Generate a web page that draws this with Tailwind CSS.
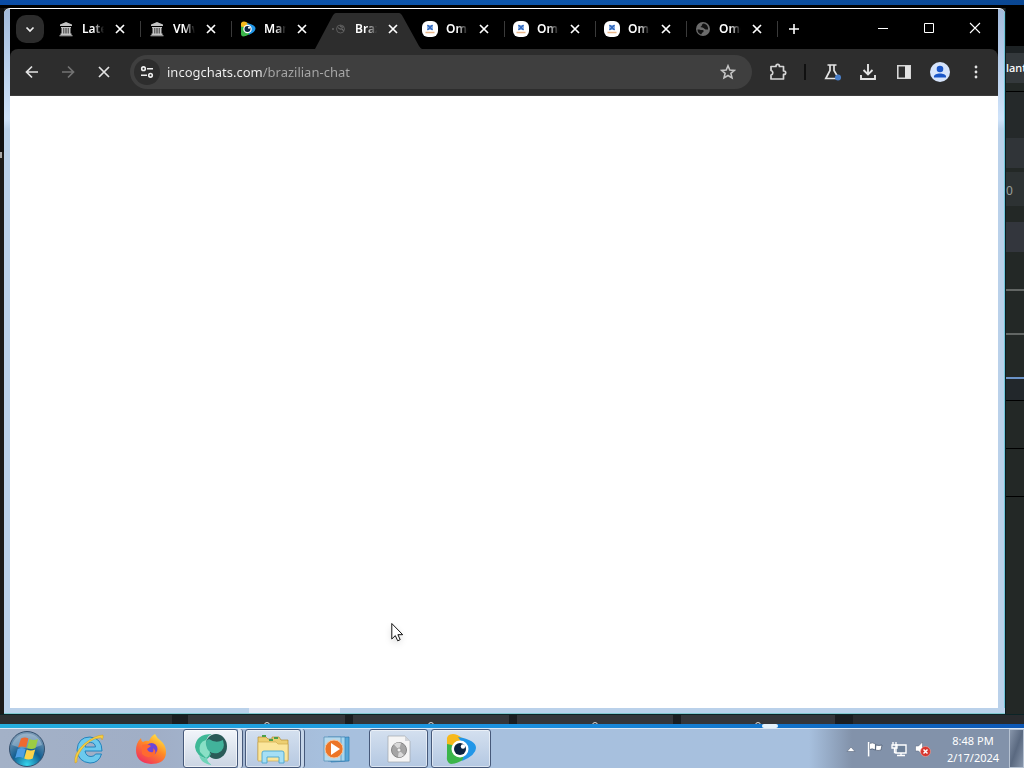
<!DOCTYPE html>
<html lang="en">

<head>
    <meta charset="UTF-8" />
    <meta name="viewport" content="width=device-width, initial-scale=1.0" />
    <title>incogchats.com/brazilian-chat</title>
    <script src="https://cdn.jsdelivr.net/npm/@tailwindcss/browser@4"></script>
</head>

<body class="h-screen flex flex-col overflow-hidden bg-[#242829] font-['Noto_Sans',sans-serif] text-xs text-white">
    <!-- Shared icons -->
    <svg class="hidden">
        <symbol id="x" viewBox="0 0 16 16">
            <path d="M4 4l8 8M12 4l-8 8" stroke="currentColor" stroke-width="1.7" fill="none" />
        </symbol>
        <symbol id="archive" viewBox="0 0 16 16">
            <path d="M8 1l6 2.500V5H2V3.500zM3 6h10v1H3zM3.500 7h2v5.500h-2zM6.200 7h1.400v5.500H6.200zM8.400 7h1.400v5.500H8.400zM10.500 7h2v5.500h-2zM2.500 12.500h11V14h-11zM1.500 14.200h13v1h-13z" fill="#c4c4c4" />
        </symbol>
        <symbol id="globe" viewBox="0 0 16 16">
            <circle cx="8" cy="8" r="7" fill="#6b6b6b" />
            <path d="M2.500 8.500c2-.5 3 1 5 .5 1.500 0 1.500 2 0 2.500-1 .5-.5 1.500-1.500 2-2.500-1-3.500-3-3.500-5zM8.500 2.500c-2 .5-1 2-2.500 3s1.500 1 2.500 1.500 1.500 2 4.500 1.500c.5-3-1.500-5.500-4.500-6z" fill="#111" />
        </symbol>
        <symbol id="omegle" viewBox="0 0 16 16">
            <rect width="16" height="16" rx="6" fill="#fff" />
            <path d="M5 4h6v5H5z" fill="#8db2e6" />
            <path d="M5.500 4l5 5M10.500 4l-5 5" stroke="#2b62b8" stroke-width="1.100" />
            <path d="M3.500 11.500h9" stroke="#e9b78a" stroke-width="1.300" />
        </symbol>
        <symbol id="manycam" viewBox="0 0 32 32">
            <path d="M2 8Q1 1 8 1q4 0 9 4l-8 11-7 4z" fill="#f7b91c" />
            <path d="M2 11l10 2 9 12Q12 31 6 31q-5-1-4-9z" fill="#3bb54a" />
            <path d="M13 4q18 3 18 11 0 7-14 13l4-12z" fill="#2196e8" />
            <circle cx="15" cy="16" r="8.500" fill="#fff" />
            <circle cx="15" cy="16" r="6" fill="#0c2340" />
            <circle cx="18" cy="13.500" r="2.200" fill="#fff" />
        </symbol>
    </svg>

    <!-- Top edge of the desktop -->
    <div class="h-[5px] shrink-0 bg-linear-to-r from-[#0a4ca5] via-[#0c55ab] to-[#0a4793]"></div>
    <div class="h-[3px] shrink-0 bg-black"></div>

    <div class="flex flex-1 min-h-0">
        <div class="w-1 shrink-0 bg-[#1b1a19] flex flex-col">
            <div class="h-36 bg-[#101011]"></div>
            <div class="h-1.5 w-0.5 bg-[#a8a8a8]"></div>
        </div>

        <!-- Browser window -->
        <div class="flex flex-1 flex-col min-w-0 border-t border-white bg-[#bad1ea] rounded-t-md overflow-hidden">
            <div class="flex flex-1 min-h-0 bg-linear-to-b from-[#a3bbdc] via-[#cfe3fa] via-[110px] to-[#bad1ea] to-[120px]">
                <div class="w-1.5 shrink-0"></div>
                <div class="flex flex-1 flex-col min-w-0 bg-black">
                    <!-- Tabs -->
                    <div class="h-10 shrink-0 flex items-center">
                        <button aria-label="Search tabs" class="mx-1.5 size-7 shrink-0 rounded-[10px] bg-[#2c2c2c] flex items-center justify-center">
                            <svg class="size-4" viewBox="0 0 16 16"><path d="M4.500 6.500L8 10l3.500-3.500" fill="none" stroke="#eee" stroke-width="1.700" /></svg>
                        </button>
                        <div class="w-[91px] h-4 flex items-center gap-2 pl-2 border-r border-[#3a3a3a]">
                            <svg class="size-4 shrink-0"><use href="#archive" /></svg>
                            <a href="#" class="w-[22px] overflow-hidden font-semibold mask-r-from-50%">Latest</a>
                            <button aria-label="Close tab" class="size-4"><svg class="size-4"><use href="#x" /></svg></button>
                        </div>
                        <div class="w-[91px] h-4 flex items-center gap-2 pl-2 border-r border-[#3a3a3a]">
                            <svg class="size-4 shrink-0"><use href="#archive" /></svg>
                            <a href="#" class="w-[22px] overflow-hidden font-semibold mask-r-from-50%">VMware</a>
                            <button aria-label="Close tab" class="size-4"><svg class="size-4"><use href="#x" /></svg></button>
                        </div>
                        <div class="w-[91px] h-4 flex items-center gap-2 pl-2">
                            <svg class="size-4 shrink-0"><use href="#manycam" /></svg>
                            <a href="#" class="w-[22px] overflow-hidden font-semibold mask-r-from-50%">ManyCam</a>
                            <button aria-label="Close tab" class="size-4"><svg class="size-4"><use href="#x" /></svg></button>
                        </div>
                        <div class="relative w-[91px] h-10 flex items-center gap-2 pl-2">
                            <svg class="absolute -left-2 bottom-0 w-[107px] h-9" viewBox="0 0 107 36"><path d="M0 36L17 4Q19 0 21 0H84Q86 0 88 4L104 33Q106 36 107 36z" fill="#2d2d2d" /></svg>
                            <svg class="relative size-4 shrink-0" viewBox="0 0 16 16">
                                <circle cx="2" cy="8" r="1" fill="#606060" />
                                <circle cx="9.500" cy="8" r="4" fill="none" stroke="#5c5c5c" />
                                <path d="M7 6.500q1.500 2 3 1.500t2.500 2M9 4.500q1 2 3.500 1.500" fill="none" stroke="#6a6a6a" stroke-width="1.100" />
                            </svg>
                            <a href="#" class="relative w-[22px] overflow-hidden font-semibold mask-r-from-50%">Brazilian</a>
                            <button aria-label="Close tab" class="relative size-4"><svg class="size-4"><use href="#x" /></svg></button>
                        </div>
                        <div class="w-[91px] h-4 flex items-center gap-2 pl-2 border-r border-[#3a3a3a]">
                            <svg class="size-4 shrink-0"><use href="#omegle" /></svg>
                            <a href="#" class="w-[22px] overflow-hidden font-semibold mask-r-from-50%">Omegle</a>
                            <button aria-label="Close tab" class="size-4"><svg class="size-4"><use href="#x" /></svg></button>
                        </div>
                        <div class="w-[91px] h-4 flex items-center gap-2 pl-2 border-r border-[#3a3a3a]">
                            <svg class="size-4 shrink-0"><use href="#omegle" /></svg>
                            <a href="#" class="w-[22px] overflow-hidden font-semibold mask-r-from-50%">Omegle</a>
                            <button aria-label="Close tab" class="size-4"><svg class="size-4"><use href="#x" /></svg></button>
                        </div>
                        <div class="w-[91px] h-4 flex items-center gap-2 pl-2 border-r border-[#3a3a3a]">
                            <svg class="size-4 shrink-0"><use href="#omegle" /></svg>
                            <a href="#" class="w-[22px] overflow-hidden font-semibold mask-r-from-50%">Omegle</a>
                            <button aria-label="Close tab" class="size-4"><svg class="size-4"><use href="#x" /></svg></button>
                        </div>
                        <div class="w-[91px] h-4 flex items-center gap-2 pl-2 border-r border-[#3a3a3a]">
                            <svg class="size-4 shrink-0"><use href="#globe" /></svg>
                            <a href="#" class="w-[22px] overflow-hidden font-semibold mask-r-from-50%">Omegle</a>
                            <button aria-label="Close tab" class="size-4"><svg class="size-4"><use href="#x" /></svg></button>
                        </div>
                        <button aria-label="New tab" class="w-8 flex justify-center">
                            <svg class="size-4" viewBox="0 0 16 16"><path d="M8 3v10M3 8h10" stroke="#fff" stroke-width="1.600" /></svg>
                        </button>
                        <!-- Window controls -->
                        <div class="ml-auto flex pb-0.5">
                            <button aria-label="Minimize" class="w-[46px] flex justify-center"><svg class="size-4" viewBox="0 0 16 16"><path d="M3 8.500h10" stroke="#fff" /></svg></button>
                            <button aria-label="Maximize" class="w-[46px] flex justify-center"><svg class="size-4" viewBox="0 0 16 16"><path d="M3.500 3.500h9v9h-9z" fill="none" stroke="#fff" /></svg></button>
                            <button aria-label="Close" class="w-[46px] flex justify-center"><svg class="size-4" viewBox="0 0 16 16"><path d="M3 3l10 10M13 3L3 13" stroke="#fff" stroke-width="1.100" /></svg></button>
                        </div>
                    </div>

                    <!-- Toolbar -->
                    <div class="h-[47px] shrink-0 flex items-center px-1 rounded-t-lg bg-[#2d2d2d] border-b border-[#3c3c3c]">
                        <button aria-label="Back" class="w-9 flex justify-center"><svg class="size-4" viewBox="0 0 16 16"><path d="M14 8H3M8 2.500L2.500 8 8 13.500" fill="none" stroke="#e3e3e3" stroke-width="1.700" /></svg></button>
                        <button aria-label="Forward" class="w-9 flex justify-center"><svg class="size-4" viewBox="0 0 16 16"><path d="M2 8h11M8 2.500L13.500 8 8 13.500" fill="none" stroke="#737373" stroke-width="1.700" /></svg></button>
                        <button aria-label="Stop" class="w-9 flex justify-center"><svg class="size-4" viewBox="0 0 16 16"><path d="M3 3l10 10M13 3L3 13" stroke="#e3e3e3" stroke-width="1.700" /></svg></button>
                        <div class="mx-2 h-[34px] flex-1 min-w-0 flex items-center rounded-full bg-[#3f3f3f] pl-1 pr-4">
                            <button aria-label="View site information" class="size-[26px] shrink-0 rounded-full bg-[#2d2d2d] flex items-center justify-center">
                                <svg class="size-4" viewBox="0 0 16 16" fill="none" stroke="#eee" stroke-width="1.600"><circle cx="4.500" cy="4.700" r="1.800" /><path d="M8 4.700h6M2 11.300h6" /><circle cx="11.500" cy="11.300" r="1.800" /></svg>
                            </button>
                            <input aria-label="Address" value="incogchats.com/brazilian-chat" class="ml-[7px] pt-0.5 flex-1 min-w-0 text-[13px] text-transparent bg-clip-text bg-[linear-gradient(to_right,#f4f4f4_96px,#a9a9a9_96px)] outline-none" />
                            <button aria-label="Bookmark this tab" class="size-4"><svg class="size-4" viewBox="0 0 16 16"><path d="M8 1.800l1.800 4.200 4.600.4-3.500 3 1.100 4.500L8 11.500l-4 2.400 1.100-4.500-3.500-3 4.600-.4z" fill="none" stroke="#c4c4c4" stroke-width="1.600" /></svg></button>
                        </div>
                        <button aria-label="Extensions" class="w-9 flex justify-center"><svg class="size-5" viewBox="0 0 20 20"><path d="M3 4.500h5V4a1.700 1.700 0 0 1 3.400 0v.5H15.500V9h.5a1.700 1.700 0 0 1 0 3.400h-.5V17H3v-4a2.300 2.300 0 0 0 0-4.500z" fill="none" stroke="#d6d6d6" stroke-width="1.700" stroke-linejoin="round" /></svg></button>
                        <div class="mx-2 w-0.5 h-4 bg-[#101010]"></div>
                        <button aria-label="Labs" class="w-9 flex justify-center"><svg class="size-5" viewBox="0 0 20 20"><path d="M5.500 3h9M8 3v5.500L3.800 16.500H14M12 3v5.500l3 5" fill="none" stroke="#e3e3e3" stroke-width="1.700" /><circle cx="16" cy="15.500" r="3" fill="#4a80cb" /></svg></button>
                        <button aria-label="Downloads" class="w-9 flex justify-center"><svg class="size-5" viewBox="0 0 20 20"><path d="M10 2v10M5.500 8l4.500 4.500L14.500 8M3 13v4h14v-4" fill="none" stroke="#e3e3e3" stroke-width="1.900" /></svg></button>
                        <button aria-label="Side panel" class="w-9 flex justify-center"><svg class="size-5" viewBox="0 0 20 20"><path d="M3.800 3.800h12.400v12.400H3.800z" fill="none" stroke="#d6d6d6" stroke-width="1.600" /><path d="M11 4h5v12h-5z" fill="#e3e3e3" /></svg></button>
                        <button aria-label="Profile" class="w-9 flex justify-center"><svg class="size-5" viewBox="0 0 20 20"><circle cx="10" cy="10" r="10" fill="#d6e4fb" /><circle cx="10" cy="7" r="3.300" fill="#1a56c8" /><path d="M4 15.500v-1c0-4 12-4 12 0v1z" fill="#1a56c8" /></svg></button>
                        <button aria-label="Menu" class="w-9 flex justify-center"><svg class="size-5" viewBox="0 0 20 20" fill="#e3e3e3"><circle cx="10" cy="5" r="1.400" /><circle cx="10" cy="10" r="1.400" /><circle cx="10" cy="15" r="1.400" /></svg></button>
                    </div>

                    <!-- Page -->
                    <main class="flex-1 bg-white"></main>
                </div>
                <div class="w-[7px] shrink-0 border-r border-[#6fc4d8]"></div>
            </div>
            <div class="h-1.5 shrink-0 border-b border-[#7fc7cf] flex">
                <div class="ml-[245px] w-[91px] bg-[#e3e8f5]"></div>
            </div>
        </div>

        <!-- Window behind, right side -->
        <div class="w-[19px] shrink-0 flex flex-col overflow-hidden border-l border-[#0b1c20] bg-[#232826] whitespace-nowrap">
            <div class="h-[38px] shrink-0 bg-black"></div>
            <div class="h-[7px] shrink-0 bg-[#1d2224]"></div>
            <div class="h-[30px] shrink-0 bg-[#34393c] text-[11px] leading-[30px] font-medium">lanti</div>
            <div class="h-[9px] shrink-0 border-b border-black"></div>
            <div class="h-[46px] shrink-0 bg-[#25292a]"></div>
            <div class="h-[30px] shrink-0 bg-[#303438]"></div>
            <div class="h-1 shrink-0"></div>
            <div class="h-[34px] shrink-0 bg-[#2d3233] leading-[38px] text-[#98a09c]">0</div>
            <div class="h-4 shrink-0"></div>
            <div class="h-[30px] shrink-0 bg-[#33363d]"></div>
            <div class="h-[39px] shrink-0 border-b-2 border-[#626664]"></div>
            <div class="h-11 shrink-0 border-b-2 border-[#626664]"></div>
            <div class="h-11 shrink-0 border-b-2 border-[#6b93c8]"></div>
            <div class="h-[22px] shrink-0 border-b border-black bg-[#22272b]"></div>
            <div class="h-12 shrink-0 border-b border-black"></div>
            <div class="h-12 shrink-0 border-b border-black"></div>
        </div>
    </div>

    <!-- Window behind, bottom side -->
    <div class="h-2.5 shrink-0 flex overflow-hidden border-t border-[#0c2426] bg-[#1a1d20]">
        <div class="w-[172px] bg-[#2d2f31]"></div>
        <div class="ml-4 w-[157px] bg-[#34363a] flex justify-center"><div class="mt-[7px] size-1.5 rounded-full border border-[#dadada]"></div></div>
        <div class="ml-2 w-[156px] bg-[#34363a] flex justify-center"><div class="mt-[7px] size-1.5 rounded-full border border-[#dadada]"></div></div>
        <div class="ml-2 w-[156px] bg-[#34363a] flex justify-center"><div class="mt-[7px] size-1.5 rounded-full border border-[#dadada]"></div></div>
        <div class="ml-2 w-[154px] bg-[#34363a] flex justify-center"><div class="mt-[7px] size-1.5 rounded-full border border-[#dadada]"></div></div>
        <div class="ml-[18px] flex-1 bg-[#292b2e]"></div>
    </div>
    <div class="h-1 shrink-0 flex bg-linear-to-r from-[#25aede] via-[#1b91e0] to-[#0d57b5]">
        <div class="ml-[762px] w-4 rounded-full bg-[#e4f2fc]"></div>
    </div>

    <!-- Taskbar -->
    <footer class="h-10 shrink-0 flex items-center border-t border-[#dce7f4] bg-linear-to-r from-[#a3b1c7] from-0% via-[#a0aec6] via-15% to-[#a7c0de] to-32%">
        <button aria-label="Start" class="w-[54px] flex justify-center">
            <svg class="size-9" viewBox="0 0 36 36">
                <defs>
                    <radialGradient id="orb" cx=".5" cy=".95" r=".85"><stop offset="0" stop-color="#35d5ed" /><stop offset=".5" stop-color="#135f92" /><stop offset="1" stop-color="#7597b4" /></radialGradient>
                </defs>
                <circle cx="18" cy="18" r="17.500" fill="url(#orb)" stroke="#35506e" />
                <path d="M3 14A15.500 15.500 0 0 1 33 14Q18 21 3 14z" fill="#c6d8e5" opacity=".4" />
                <path d="M12 7.500q4-2 7.500 0l-2.500 9q-4-2-8 0z" fill="#ee6930" />
                <path d="M20.500 8q4 2 8.500 0l-2.500 9q-4 2-8.500 0z" fill="#9dcc43" />
                <path d="M8.700 18q4-2 8 0l-2.500 9q-4-2-8 0z" fill="#4d9ee5" />
                <path d="M17.700 18.500q4 2 8.500 0l-2.500 9q-4 2-8.500 0z" fill="#fcd34b" />
            </svg>
        </button>
        <button aria-label="Internet Explorer" class="ml-1 w-[62px] flex justify-center">
            <svg class="size-8" viewBox="0 0 32 32">
                <path d="M29 18H12q1 5.500 6 5.500 3.500 0 4.500-2.500h6Q26 30 17 30 5 29 4 17 5 4 17 4q12 1 12 14zM12 14h10.500q-.5-4.500-5-4.500T12 14z" fill="#6cc9ed" stroke="#2283bd" />
                <path d="M2 30Q0 21 11 11 22 2 30 2q1 2-1 5 0-3-3-2Q17 6 9 16q-6 8-5 13z" fill="#f6cf3f" stroke="#d19a20" stroke-width=".5" />
            </svg>
        </button>
        <button aria-label="Firefox" class="w-[61px] flex justify-center">
            <svg class="size-8" viewBox="0 0 32 32">
                <defs>
                    <linearGradient id="fox" x1=".85" y1="0" x2=".2" y2="1"><stop offset="0" stop-color="#fff14a" /><stop offset=".45" stop-color="#ff8a25" /><stop offset="1" stop-color="#f02a63" /></linearGradient>
                </defs>
                <path d="M6 5q0 3 2 4 3-2 6-1 2-5 6-7 2 4 5 6 6 5 6 12 0 12-15 12Q1 30 1 17q0-7 5-12z" fill="url(#fox)" />
                <circle cx="16.500" cy="16" r="6" fill="#7046d8" />
                <path d="M7 12q5-2 9 1l-4 3q2 4 6 3 1-2 0-4 5 4 0 8-6 3-11-2z" fill="#ff6a30" />
            </svg>
        </button>
        <button aria-label="Browser" class="ml-0.5 w-[55px] h-[39px] flex items-center justify-center rounded-[3px] border border-[#46597a] bg-linear-to-b from-[#f1f5fa] to-[#cbd5e3] inset-ring inset-ring-white/60">
            <svg class="size-8" viewBox="0 0 32 32">
                <ellipse cx="21" cy="13.500" rx="11" ry="12.500" fill="#2a5b58" />
                <path d="M0 14Q1 1 17 1q-7 3-6 11 1 5 5 9-1 3-4 5Q1 23 0 14z" fill="#3fb997" />
                <path d="M5 19q-2-10 6-12 0 6 4 10 0 6-4 8z" fill="#8ae0c6" />
                <path d="M11 12q-1-5 3-6 7 5 14 1 3 10-5 13-10 2-12-8z" fill="#42b39b" />
                <path d="M4 22q4 4 8 3 0 4 5 7Q6 31 4 22z" fill="#6fd4b8" />
            </svg>
        </button>
        <div class="w-[5px] h-[39px] rounded-r-[3px] border-r border-[#46597a] bg-[#dce4ef]"></div>
        <button aria-label="File Explorer" class="ml-0.5 w-14 h-[39px] flex items-center justify-center rounded-[3px] border border-[#46597a] bg-linear-to-b from-[#d4e0ef] to-[#b7c9e1] inset-ring inset-ring-white/50">
            <svg class="size-8" viewBox="0 0 32 32">
                <path d="M1 4h8l2 2h4V4h7l2 3h7v20H1z" fill="#edcf71" stroke="#b48c32" stroke-width=".7" />
                <path d="M5 3h4M17 5h4M12 7h4" stroke="#4b9f4b" stroke-width="2" />
                <path d="M1 9h18l2 2h10v17H1z" fill="#fbe69c" stroke="#cfab4e" stroke-width=".7" />
                <path d="M5 30V20q0-2 2-2h18q2 0 2 2v10h-5v-6H10v6z" fill="#a5dff5" stroke="#4ba6cf" stroke-width=".9" />
            </svg>
        </button>
        <div class="w-1 h-[39px] rounded-r-[3px] border-r border-[#46597a] bg-[#c5d5e8]"></div>
        <button aria-label="Media Player" class="w-16 flex justify-center">
            <svg class="size-7" viewBox="0 0 28 28">
                <path d="M8 3l18-1v24L8 27z" fill="#57a7d7" stroke="#2c79ae" stroke-width=".7" />
                <path d="M5 2h17v24H5z" fill="#a6d6ef" stroke="#3a83b4" stroke-width=".7" />
                <path d="M1 2h17v24H1z" fill="#b5d9ed" stroke="#4d8cb6" stroke-width=".7" />
                <circle cx="11" cy="14" r="9" fill="#ec7527" stroke="#f7c49c" />
                <path d="M8 8l9 6-9 6z" fill="#fff" />
            </svg>
        </button>
        <button aria-label="Disc image" class="w-[59px] h-[39px] flex items-center justify-center rounded-[3px] border border-[#46597a] bg-linear-to-b from-[#d4e0ef] to-[#b4c8e2] inset-ring inset-ring-white/50">
            <svg class="w-6 h-7" viewBox="0 0 24 28">
                <path d="M1 1h17l5 5v21H1z" fill="#f5f5f5" stroke="#a2a6ad" stroke-width=".7" />
                <path d="M18 1v5h5z" fill="#d0d3d8" />
                <circle cx="12" cy="15" r="7.500" fill="#a5a5a5" stroke="#858585" />
                <path d="M12 15L7 9.500q3-3 7-1.500zM12 15l5 5q-3 3-6 2z" fill="#d9d9d9" />
                <circle cx="12" cy="15" r="2" fill="#eee" stroke="#888" stroke-width=".7" />
            </svg>
        </button>
        <button aria-label="ManyCam" class="ml-[3px] w-[60px] h-[39px] flex items-center justify-center rounded-[3px] border border-[#46597a] bg-linear-to-b from-[#d4e0ef] to-[#b4c8e2] inset-ring inset-ring-white/50">
            <svg class="size-8"><use href="#manycam" /></svg>
        </button>

        <!-- Tray -->
        <div class="ml-auto h-full flex items-center pl-[30px] bg-linear-to-r from-transparent to-[#8292aa] to-20%">
            <button aria-label="Show hidden icons" class="w-6 flex justify-center"><svg class="size-4" viewBox="0 0 16 16"><path d="M4 10.500l4-4.500 4 4.500z" fill="#fff" stroke="#59677c" stroke-width=".6" /></svg></button>
            <button aria-label="Action Center" class="w-6 flex justify-center"><svg class="size-4" viewBox="0 0 16 16"><path d="M1.500 1v14.500M2.500 2.500q3-1.500 6 .5l-.2 6q-3-2-5.800-.5zM9 4q3 1 6 0l-1 5q-3 1-5.500 0z" fill="#fff" stroke="#35445c" stroke-width=".6" /><path d="M1.600 1v14.500" stroke="#fff" stroke-width="1.500" /></svg></button>
            <button aria-label="Network" class="w-6 flex justify-center"><svg class="size-4" viewBox="0 0 16 16"><path d="M5 4h10v8H5z" fill="#6d8098" stroke="#fff" stroke-width="1.400" /><path d="M10 12v2M6 14.500h8M2 1v3M5 1v3M1 4h5v3H1zM3.500 7v4.500H5" fill="none" stroke="#fff" stroke-width="1.300" /></svg></button>
            <button aria-label="Volume muted" class="w-6 flex justify-center"><svg class="size-4" viewBox="0 0 16 16"><path d="M.5 5h3l4-4v13l-4-4h-3z" fill="#fff" stroke="#59677c" stroke-width=".5" /><circle cx="10.500" cy="10.500" r="5" fill="#d7362e" stroke="#f3a49b" stroke-width=".6" /><path d="M8.500 8.500l4 4M12.500 8.500l-4 4" stroke="#fff" stroke-width="1.500" /></svg></button>
            <div class="w-[74px] pl-0.5 text-center text-[11px] leading-[17px]">
                <p>8:48 PM</p>
                <p>2/17/2024</p>
            </div>
            <button aria-label="Show desktop" class="w-[15px] h-full border border-[#b5c1d1] bg-linear-to-br from-[#8795aa] via-[#5a6980] to-[#8795aa]"></button>
        </div>
    </footer>

    <!-- Mouse pointer -->
    <svg class="absolute left-[391px] top-[622px] w-4 h-5 drop-shadow-md" viewBox="0 0 16 20">
        <path d="M.8 1.500v15.500l3.500-3.400 2.400 5.200 2.500-1.100-2.300-5h4.800z" fill="#fff" stroke="#111" />
    </svg>
</body>

</html>
